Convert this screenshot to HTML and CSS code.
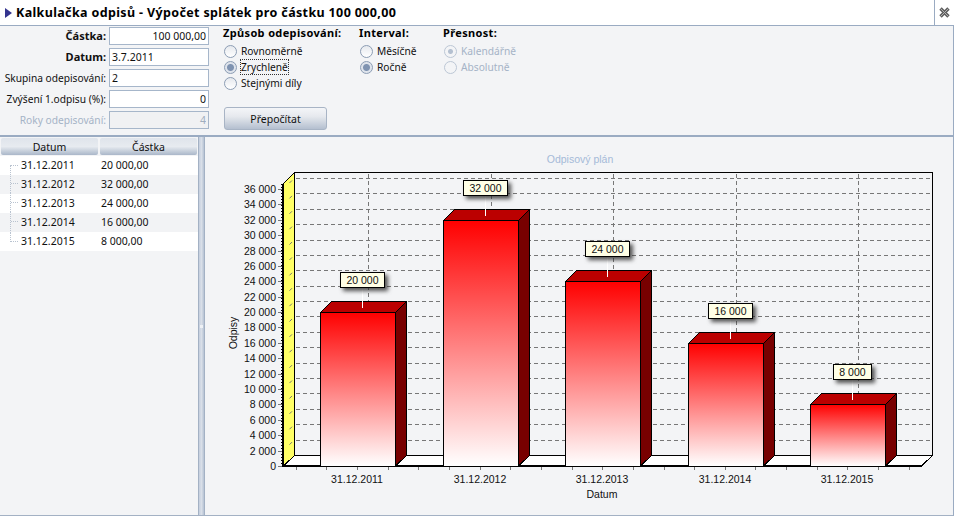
FILE: index.html

```html
<!DOCTYPE html>
<html lang="cs">
<head>
  <meta charset="UTF-8">
  <title>Kalkulačka odpisů</title>
  <link rel="stylesheet" href="styles.css">
</head>
<body>

<div class="window">
  <div class="titlebar">
    <span class="title-arrow"></span>
    <h1>Kalkulačka odpisů - Výpočet splátek pro částku 100 000,00</h1>
    <div class="title-close">
      <svg width="11" height="11" viewBox="0 0 11 11">
        <path d="M1.5 1.5 L9.5 9.5 M9.5 1.5 L1.5 9.5" stroke="#5f5f5f" stroke-width="3.4"/>
        <path d="M2 2 L9 9 M9 2 L2 9" stroke="#b0b0b0" stroke-width="1"/>
      </svg>
    </div>
  </div>

  <div class="params">
    <div class="form">
      <label class="strong">Částka:</label>
      <input type="text" class="right" value="100 000,00">
      <label class="strong">Datum:</label>
      <input type="text" value="3.7.2011">
      <label>Skupina odepisování:</label>
      <input type="text" value="2">
      <label>Zvýšení 1.odpisu (%):</label>
      <input type="text" class="right" value="0">
      <label class="off">Roky odepisování:</label>
      <input type="text" class="right" value="4" disabled>
    </div>

    <div class="group group-way">
      <div class="group-title">Způsob odepisování:</div>
      <label class="radio"><input type="radio" name="way">Rovnoměrně</label>
      <label class="radio"><input type="radio" name="way" checked><span class="focused">Zrychleně</span></label>
      <label class="radio"><input type="radio" name="way">Stejnými díly</label>
      <button class="recalc">Přepočítat</button>
    </div>

    <div class="group group-interval">
      <div class="group-title">Interval:</div>
      <label class="radio"><input type="radio" name="interval">Měsíčně</label>
      <label class="radio"><input type="radio" name="interval" checked>Ročně</label>
    </div>

    <div class="group">
      <div class="group-title">Přesnost:</div>
      <label class="radio off"><input type="radio" name="prec" checked disabled>Kalendářně</label>
      <label class="radio off"><input type="radio" name="prec" disabled>Absolutně</label>
    </div>
  </div>

  <div class="main">
    <div class="plan">
      <div class="plan-head">
        <div class="head-cell">Datum</div>
        <div class="head-cell">Částka</div>
      </div>
      <div class="plan-row"><span class="branch first"></span><span class="date">31.12.2011</span><span>20 000,00</span></div>
      <div class="plan-row"><span class="branch"></span><span class="date">31.12.2012</span><span>32 000,00</span></div>
      <div class="plan-row"><span class="branch"></span><span class="date">31.12.2013</span><span>24 000,00</span></div>
      <div class="plan-row"><span class="branch"></span><span class="date">31.12.2014</span><span>16 000,00</span></div>
      <div class="plan-row"><span class="branch last"></span><span class="date">31.12.2015</span><span>8 000,00</span></div>
    </div>
    <div class="splitter"><span class="grip"></span></div>
    <div class="chart">
      <svg id="chart" width="748" height="378" viewBox="205 137 748 378"></svg>
    </div>
  </div>
</div>

<script src="script.js"></script>

</body>
</html>
```

FILE: styles.css

```css
* {
  box-sizing: border-box;
}
body {
  margin: 0;
  font-family: "Noto Sans", sans-serif;
  font-size: 10.5px;
  color: #101010;
  background-color: #ffffff;
  overflow: hidden;
}
.window {
  width: 954px;
  height: 516px;
  display: flex;
  flex-direction: column;
}

/* title */
.titlebar {
  height: 26px;
  flex: none;
  display: flex;
  align-items: center;
  padding-left: 5px;
  background-color: #ffffff;
  border-bottom: 1px solid #9aabc2;
}
.title-arrow {
  width: 0;
  height: 0;
  margin-right: 4px;
  border-left: 7px solid #34348f;
  border-top: 5px solid transparent;
  border-bottom: 5px solid transparent;
}
h1 {
  flex: 1;
  margin: 0;
  font-size: 12.5px;
  font-weight: bold;
  letter-spacing: 0.36px;
  color: #000000;
}
.title-close {
  width: 20px;
  height: 25px;
  display: flex;
  align-items: center;
  justify-content: center;
  border-left: 1px solid #9aabc2;
}

/* top panel */
.params {
  height: 109px;
  flex: none;
  display: flex;
  background-color: #f3f4f6;
  border-right: 1px solid #9aabc2;
}
.form {
  width: 223px;
  padding: 1px 0 0 0;
  display: grid;
  grid-template-columns: 106px 100px;
  grid-auto-rows: 18px;
  row-gap: 3px;
  column-gap: 3px;
  align-items: center;
}
.form label {
  text-align: right;
  white-space: nowrap;
  font-size: 10.2px;
}
.form label.strong {
  padding-bottom: 2px;
  font-weight: bold;
  font-size: 11px;
}
.form input {
  width: 100px;
  height: 18px;
  padding: 0 2px;
  border: 1px solid #a6b6ca;
  background-color: #ffffff;
  font: inherit;
  color: inherit;
  outline: none;
}
.form input.right {
  text-align: right;
}
.form input:disabled {
  background-color: #f0f1f3;
  color: #a0aebf;
}
.form label.off,
.off {
  color: #a5b3c6;
}
.group-way {
  width: 136px;
}
.group-interval {
  width: 84px;
}
.group-title {
  height: 17px;
  font-weight: bold;
  font-size: 11px;
  letter-spacing: 0.35px;
  line-height: 14px;
  color: #000000;
}
.radio {
  height: 16px;
  display: flex;
  align-items: center;
  white-space: nowrap;
  font-size: 10.2px;
}
.radio input {
  appearance: none;
  width: 13px;
  height: 13px;
  margin: 0 4px 0 1px;
  border: 1px solid #8c9db4;
  border-radius: 50%;
  background: linear-gradient(#e6e9ee, #ffffff);
}
.radio input:checked {
  background: radial-gradient(circle, #7f93b1 0 3px, #dfe4ec 4px);
}
.radio input:disabled {
  border-color: #bcc7d5;
  background: #f3f4f6;
}
.radio input:checked:disabled {
  background: radial-gradient(circle, #b4c0d0 0 2px, #f3f4f6 3px);
}
.focused {
  outline: 1px dotted #333333;
}
.recalc {
  display: block;
  width: 103px;
  height: 23px;
  margin: 16px 0 0 1px;
  padding: 0;
  border: 1px solid #a8b4c5;
  border-radius: 3px;
  background: linear-gradient(#f4f5f8, #e6e9ee 40%, #b4bfcf);
  font: inherit;
  color: inherit;
}

/* main part */
.main {
  flex: 1;
  min-height: 0;
  display: flex;
  border-top: 2px solid #9aabc2;
  border-bottom: 1px solid #a3b1c4;
  border-right: 1px solid #9aabc2;
  background-color: #f3f4f6;
}
.plan {
  width: 198px;
  flex: none;
  padding-left: 1px;
  padding-top: 1px;
}
.plan-head {
  display: flex;
  height: 18px;
  gap: 2px;
}
.head-cell {
  width: 97px;
  height: 17px;
  border-radius: 2px;
  background: linear-gradient(#dfe4eb, #e7ebf0 50%, #aab7c9);
  text-align: center;
  line-height: 18px;
}
.plan-row {
  height: 19px;
  margin-left: -1px;
  padding: 0 0 2px 10px;
  display: flex;
  align-items: center;
  background-color: #ffffff;
}
.plan-row:nth-child(odd) {
  background-color: #f2f3f5;
}
.date {
  width: 80px;
}
.branch {
  width: 9px;
  height: 19px;
  margin-right: 2px;
  border-left: 1px dotted #b9c3d0;
  background: repeating-linear-gradient(90deg, #b9c3d0 0 1px, transparent 1px 2px) center / 100% 1px no-repeat;
}
.branch.first {
  height: 10px;
  align-self: flex-end;
  margin-bottom: -2px;
  background-position: top;
}
.branch.last {
  height: 10px;
  align-self: flex-start;
  background-position: bottom;
}
.splitter {
  width: 7px;
  flex: none;
  display: flex;
  align-items: center;
  justify-content: center;
  border-left: 1px solid #a3b1c4;
  border-right: 1px solid #a3b1c4;
  background: linear-gradient(90deg, #c4cede, #d9dfe8 50%, #b6c2d3);
}
.grip {
  width: 3px;
  height: 3px;
  background-color: #eef1f5;
}
.chart {
  flex: 1;
  min-width: 0;
}
#chart {
  display: block;
}
#chart text {
  font-family: "Liberation Sans", Arial, sans-serif;
  font-size: 10.5px;
  fill: #101010;
}
#chart text.chart-title {
  fill: #a5bad8;
}
.callout-box {
  filter: drop-shadow(3px 3px 2px rgba(40, 40, 40, 0.8));
}
```

FILE: script.js

```js
const NS = 'http://www.w3.org/2000/svg';
const svg = document.getElementById('chart');

function add(tag, attrs, text) {
  const el = document.createElementNS(NS, tag);
  for (const key in attrs) el.setAttribute(key, attrs[key]);
  if (text !== undefined) el.textContent = text;
  svg.appendChild(el);
  return el;
}

function fmt(n) {
  return n >= 1000 ? Math.floor(n / 1000) + ' ' + String(n % 1000).padStart(3, '0') : String(n);
}

const data = [
  { date: '31.12.2011', value: 20000 },
  { date: '31.12.2012', value: 32000 },
  { date: '31.12.2013', value: 24000 },
  { date: '31.12.2014', value: 16000 },
  { date: '31.12.2015', value: 8000 }
];

const depth = 11;
const axisX = 283.5, endX = 921.5, wallTop = 183.5, floorY = 466;
const backFloor = 455.5;
const step = 15.39;
const crisp = { 'shape-rendering': 'crispEdges' };

// gradient for the bars
const defs = add('defs', {});
const grad = document.createElementNS(NS, 'linearGradient');
grad.setAttribute('id', 'barFill');
grad.setAttribute('x1', '0');
grad.setAttribute('y1', '0');
grad.setAttribute('x2', '0');
grad.setAttribute('y2', '1');
[['0', '#ff0000'], ['1', '#ffffff']].forEach(([o, c]) => {
  const stop = document.createElementNS(NS, 'stop');
  stop.setAttribute('offset', o);
  stop.setAttribute('stop-color', c);
  grad.appendChild(stop);
});
defs.appendChild(grad);

add('text', { x: 580, y: 163, 'text-anchor': 'middle', class: 'chart-title' }, 'Odpisový plán');

// back wall
add('path', {
  d: `M${axisX + depth} ${backFloor} V${wallTop - depth} H${endX + depth} V${backFloor}`,
  fill: 'none', stroke: '#000', ...crisp
});

// grid
for (let k = 1; k <= 18; k++) {
  const y = Math.round(floorY - k * step - depth) + 0.5;
  add('line', { x1: axisX + depth + 1, x2: endX + depth, y1: y, y2: y, stroke: '#777', 'stroke-dasharray': '4 3', ...crisp });
}
data.forEach((d, i) => {
  const x = Math.round(368 + i * 122.6) + 0.5;
  add('line', { x1: x, x2: x, y1: wallTop - depth + 1, y2: backFloor, stroke: '#777', 'stroke-dasharray': '4 3', ...crisp });
});

// left wall and floor
add('path', {
  d: `M${axisX} ${wallTop} L${axisX + depth} ${wallTop - depth} V${backFloor} L${axisX} ${floorY} Z`,
  fill: '#ffff66', stroke: '#000', ...crisp
});
add('path', {
  d: `M${axisX} ${floorY} L${axisX + depth} ${backFloor} H${endX + depth} L${endX} ${floorY} Z`,
  fill: '#fff', stroke: '#000', ...crisp
});
for (let k = 1; k <= 18; k++) {
  const y = floorY - k * step;
  add('line', { x1: axisX + 6, y1: y - 6, x2: axisX + 8.5, y2: y - 8.5, stroke: '#777' });
}

// axes
add('line', { x1: 283, x2: 283, y1: wallTop, y2: floorY + 1, stroke: '#000', 'stroke-width': 2, ...crisp });
add('line', { x1: 281.5, x2: 281.5, y1: wallTop, y2: floorY, stroke: '#000', 'stroke-dasharray': '1 2', ...crisp });
add('line', { x1: 283, x2: endX, y1: floorY, y2: floorY, stroke: '#000', 'stroke-width': 2, ...crisp });

for (let k = 0; k <= 18; k++) {
  const y = Math.round(floorY - k * step);
  add('line', { x1: 278, x2: 282, y1: y + 0.5, y2: y + 0.5, stroke: '#777', ...crisp });
  add('text', { x: 276, y: y + 4, 'text-anchor': 'end' }, fmt(k * 2000));
}
for (let k = -2; k <= 18; k++) {
  const x = Math.round(357 + k * 30.65) + 0.5;
  add('line', { x1: x, x2: x, y1: floorY + 1, y2: floorY + 4, stroke: '#777', ...crisp });
}
add('text', { x: 237, y: 333, 'text-anchor': 'middle', transform: 'rotate(-90 237 333)' }, 'Odpisy');
add('text', { x: 602, y: 498, 'text-anchor': 'middle' }, 'Datum');

// bars
data.forEach((d, i) => {
  const x = Math.round(320 + i * 122.6) + 0.5;
  const w = 75;
  const y = Math.round(floorY - d.value / 2000 * step) + 0.5;
  add('path', { d: `M${x} ${y} l${depth} ${-depth} h${w} l${-depth} ${depth} Z`, fill: '#bb0000', stroke: '#000', ...crisp });
  add('path', { d: `M${x + w} ${y} l${depth} ${-depth} V${backFloor} L${x + w} ${floorY} Z`, fill: '#780000', stroke: '#000', ...crisp });
  add('rect', { x: x, y: y, width: w, height: floorY - y, fill: 'url(#barFill)', stroke: '#000', ...crisp });
  add('text', { x: x + 36.5, y: 483, 'text-anchor': 'middle' }, d.date);
});

// value labels go over everything else
data.forEach((d, i) => {
  const x = Math.round(320 + i * 122.6) + 0.5;
  const y = Math.round(floorY - d.value / 2000 * step) + 0.5;
  const w = d.value >= 10000 ? 44 : 38;
  const cx = x + 42;
  add('line', { x1: cx, x2: cx, y1: y - 25, y2: y - 5, stroke: '#fff', ...crisp });
  add('rect', { x: cx - w / 2, y: y - 40, width: w, height: 15, fill: '#ffffe6', stroke: '#000', class: 'callout-box', ...crisp });
  add('text', { x: cx, y: y - 28.5, 'text-anchor': 'middle' }, fmt(d.value));
});
```
